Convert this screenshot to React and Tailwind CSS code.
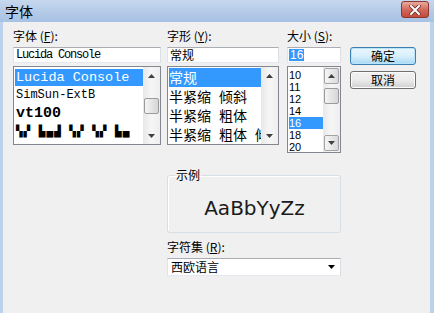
import React from "react";

const cjk = "font-['Noto_Sans_CJK_SC',sans-serif]";
const mono = "font-['Liberation_Mono','DejaVu_Sans_Mono',monospace]";
const field =
  "bg-white border border-t-[#abadb3] border-l-[#e2e3ea] border-r-[#dbdfe6] border-b-[#e3e9ef]";

const Arrow = ({ down }) => (
  <svg width="7" height="4" viewBox="0 0 7 4">
    <path d={down ? "M0 0h7L3.5 4z" : "M0 4h7L3.5 0z"} fill="#404040" />
  </svg>
);

const ScrollBar = ({ boxed, thumb }) => {
  const btn = boxed
    ? "h-[16px] mx-[1px] my-[1px] flex items-center justify-center border border-[#a3a3a3] rounded-[2px] bg-gradient-to-r from-[#f6f6f6] to-[#dadada]"
    : "h-[17px] flex items-center justify-center";
  return (
    <div className="w-[17px] flex flex-col bg-gradient-to-r from-[#e8e8e8] via-[#f6f6f6] to-[#eeeeee]">
      <div className={btn}>
        <Arrow />
      </div>
      <div className="flex-1">
        {thumb && (
          <div
            className={`${thumb} mx-[1px] h-[16px] border border-[#9a9a9a] rounded-[2px] bg-gradient-to-r from-[#f4f4f4] to-[#d6d6d6]`}
          />
        )}
      </div>
      <div className={btn}>
        <Arrow down />
      </div>
    </div>
  );
};

const Label = ({ text, k }) => (
  <div className={`${cjk} h-[14px] leading-[14px] text-[12px] text-black`}>
    {text} (<u>{k}</u>):
  </div>
);

export default function App() {
  return (
    <div className="w-[434px] h-[313px] flex flex-col overflow-hidden bg-[#f0f0f0] font-['Liberation_Sans','Noto_Sans_CJK_SC',sans-serif] text-[12px] text-black">
      {/* title bar */}
      <div className="h-[22px] flex items-center justify-between pl-[5px] pr-[5px] bg-gradient-to-b from-[#c6d8ee] via-[#b5cbe8] to-[#a8c2e4]">
        <span className={`${cjk} text-[14px] leading-[16px] text-black`}>字体</span>
        <div className="w-[28px] h-[17px] mt-[-3px] flex items-center justify-center rounded-[3px] border border-[#8c3a30] bg-gradient-to-b from-[#e9aa9e] via-[#d26a5c] to-[#c4493b]">
          <svg width="12" height="10" viewBox="0 0 12 10">
            <path d="M2 1l8 8M10 1l-8 8" stroke="#6a2a22" strokeWidth="3.6" strokeLinecap="square" />
            <path d="M2 1l8 8M10 1l-8 8" stroke="#ffffff" strokeWidth="2" strokeLinecap="square" />
          </svg>
        </div>
      </div>

      {/* client */}
      <div className="flex-1 flex flex-col pl-[10px] pt-[7px] bg-[#f0f0f0] border-l-[3px] border-r-[4px] border-[#bcd2ec]">
        <div className="flex items-start">
          {/* font */}
          <div className="w-[148px]">
            <Label text="字体" k="F" />
            <div className={`${field} mt-[4px] h-[16px] pl-[2px] flex items-center ${mono} text-[12px] tracking-[-1.2px]`}>
              Lucida Console
            </div>
            <div className="mt-[3px] h-[79px] bg-white border border-[#828790] flex">
              <div className="flex-1 pt-[2px] pl-[1px] overflow-hidden">
                <div className={`h-[17px] leading-[17px] bg-[#3399ff] text-white pl-[1px] ${mono} text-[13.5px] whitespace-nowrap`}>
                  Lucida Console
                </div>
                <div className={`h-[19px] leading-[19px] pl-[1px] ${mono} text-[12px] whitespace-nowrap`}>
                  SimSun-ExtB
                </div>
                <div className={`h-[18px] leading-[18px] pl-[1px] ${mono} font-bold text-[15px] whitespace-nowrap`}>
                  vt100
                </div>
                <div className="h-[18px] leading-[18px] pl-[1px] font-['DejaVu_Sans_Mono',monospace] font-bold text-[11px] whitespace-nowrap tracking-[1px]">
                  ▚▞ ▙▄▟ ▚▞ ▚▞ ▙▄
                </div>
              </div>
              <ScrollBar thumb="mt-[14px]" />
            </div>
          </div>

          {/* style */}
          <div className="ml-[6px] w-[112px]">
            <Label text="字形" k="Y" />
            <div className={`${field} mt-[4px] h-[16px] pl-[2px] flex items-center ${cjk} text-[12px]`}>
              常规
            </div>
            <div className="mt-[3px] h-[79px] bg-white border border-[#828790] flex">
              <div className={`flex-1 pt-[1px] pl-[1px] overflow-hidden ${cjk} text-[14px] whitespace-nowrap`}>
                <div className="h-[19px] leading-[19px] bg-[#3399ff] text-white">常规</div>
                <div className="h-[19px] leading-[19px] flex gap-[8px]">
                  <span>半紧缩</span>
                  <span>倾斜</span>
                </div>
                <div className="h-[19px] leading-[19px] flex gap-[8px]">
                  <span>半紧缩</span>
                  <span>粗体</span>
                </div>
                <div className="h-[19px] leading-[19px] flex gap-[8px]">
                  <span>半紧缩</span>
                  <span>粗体</span>
                  <span>倾斜</span>
                </div>
              </div>
              <ScrollBar />
            </div>
          </div>

          {/* size */}
          <div className="ml-[8px] w-[54px]">
            <Label text="大小" k="S" />
            <div className={`${field} mt-[4px] h-[16px] pl-[1px] flex items-center`}>
              <span className="bg-[#3399ff] text-white leading-[12px] px-[1px] text-[12px]">16</span>
            </div>
            <div className="mt-[3px] h-[87px] bg-white border border-[#828790] flex">
              <div className="flex-1 pt-[2px] pl-[1px] text-[11px] leading-[12px]">
                <div className="h-[12px]">10</div>
                <div className="h-[12px]">11</div>
                <div className="h-[12px]">12</div>
                <div className="h-[12px]">14</div>
                <div className="h-[12px] bg-[#3399ff] text-white">16</div>
                <div className="h-[12px]">18</div>
                <div className="h-[12px]">20</div>
              </div>
              <ScrollBar boxed thumb="mt-[3px]" />
            </div>
          </div>

          {/* buttons */}
          <div className={`ml-[9px] w-[66px] mt-[18px] flex flex-col gap-[6px] ${cjk} text-[12px]`}>
            <div className="h-[18px] flex items-center justify-center rounded-[3px] border border-[#3c7fb1] bg-gradient-to-b from-[#eaf6fd] via-[#d9f0fc] to-[#a7d9f5] shadow-[inset_0_0_0_1px_#b8e3f8]">
              确定
            </div>
            <div className="h-[18px] flex items-center justify-center rounded-[3px] border border-[#707070] bg-gradient-to-b from-[#f2f2f2] via-[#ebebeb] to-[#cfcfcf] shadow-[inset_0_0_0_1px_#fcfcfc]">
              取消
            </div>
          </div>
        </div>

        {/* sample + charset */}
        <div className="ml-[154px] w-[174px]">
          <fieldset className="mt-[15px] h-[65px] border border-[#d5dfe5] rounded-[3px] pl-[7px] pr-[6px] shadow-[inset_1px_1px_0_#ffffff]">
            <legend className={`${cjk} px-[1px] text-[12px] leading-[14px]`}>示例</legend>
            <div className="h-[46px] pt-[5px] flex items-center justify-center font-['DejaVu_Sans',sans-serif] text-[20px] text-[#1a1a1a]">
              AaBbYyZz
            </div>
          </fieldset>
          <div className="mt-[7px]">
            <Label text="字符集" k="R" />
          </div>
          <div className={`${field} mt-[4px] h-[18px] pl-[3px] pr-[5px] flex items-center justify-between ${cjk} text-[12px]`}>
            <span>西欧语言</span>
            <svg width="7" height="4" viewBox="0 0 7 4">
              <path d="M0 0h7L3.5 4z" fill="#000" />
            </svg>
          </div>
        </div>
      </div>
    </div>
  );
}
